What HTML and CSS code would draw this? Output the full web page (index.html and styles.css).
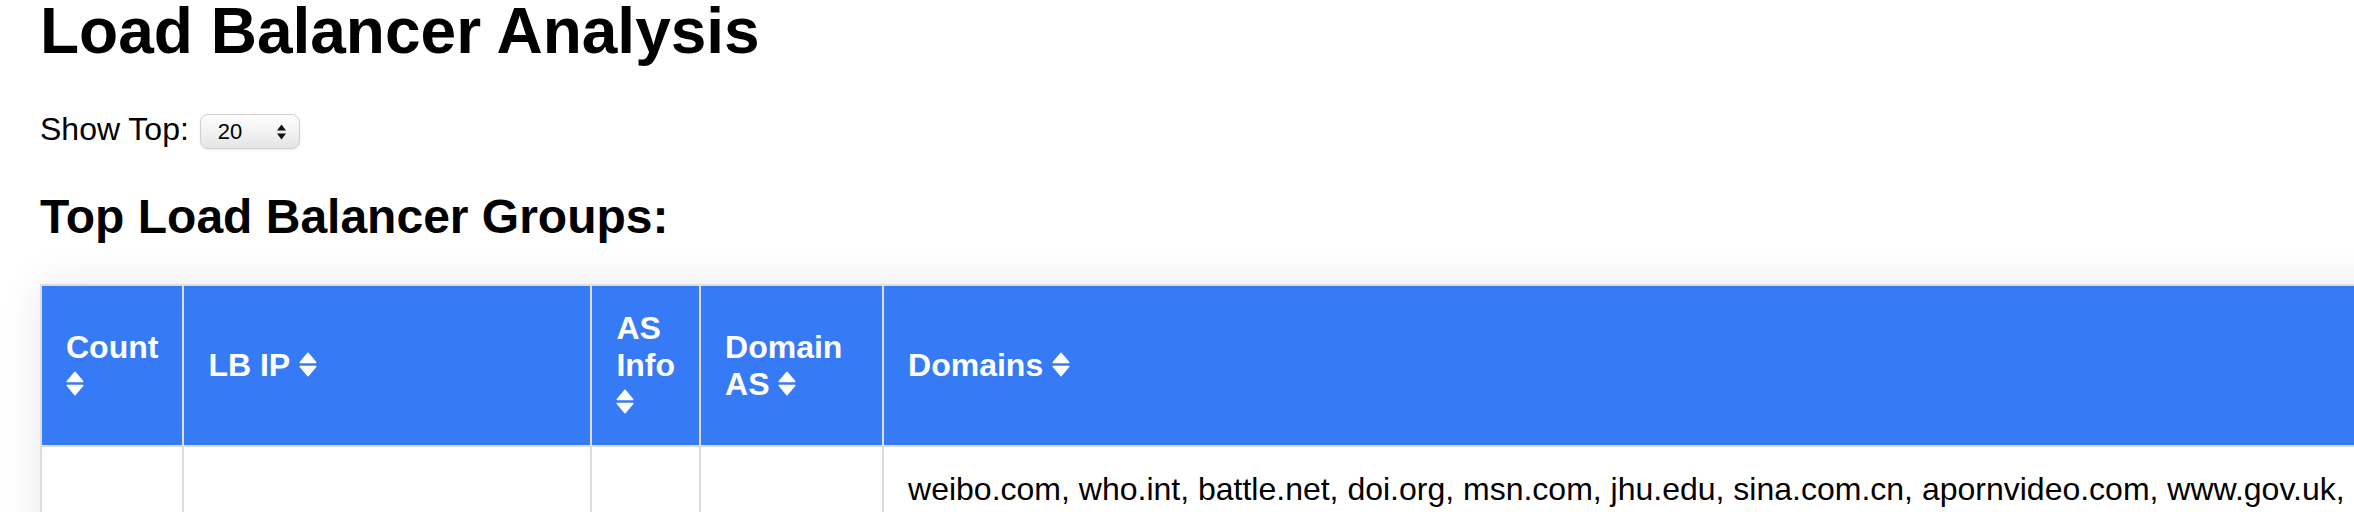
FILE: index.html
```html
<!DOCTYPE html>
<html lang="en">
<head>
<meta charset="utf-8">
<title>Load Balancer Analysis</title>
<link rel="stylesheet" href="styles.css">
</head>
<body>
<h1 class="title">Load Balancer Analysis</h1>
<div class="controls">
  <label for="topn">Show Top:</label>
  <span class="select-wrap">
    <select id="topn" class="select">
      <option>10</option>
      <option selected>20</option>
      <option>50</option>
      <option>100</option>
    </select>
    <svg class="select-arrows" viewBox="0 0 11 16" width="11" height="16" aria-hidden="true"><path d="M5.5 0.5 L10 6.5 H1 Z M1 9.5 H10 L5.5 15.5 Z" fill="#111"/></svg>
  </span>
</div>
<h2 class="subtitle">Top Load Balancer Groups:</h2>
<table class="lb-table">
  <thead>
    <tr>
      <th class="c-count">Count <svg class="sort" viewBox="0 0 18 25" width="18" height="25"><path d="M9 1.2 L16.8 10.5 H1.2 Z M1.2 14.5 H16.8 L9 23.8 Z" fill="#fff" stroke="#fff" stroke-width="1.4" stroke-linejoin="round"/></svg></th>
      <th class="c-ip">LB IP <svg class="sort" viewBox="0 0 18 25" width="18" height="25"><path d="M9 1.2 L16.8 10.5 H1.2 Z M1.2 14.5 H16.8 L9 23.8 Z" fill="#fff" stroke="#fff" stroke-width="1.4" stroke-linejoin="round"/></svg></th>
      <th class="c-as">AS Info <svg class="sort" viewBox="0 0 18 25" width="18" height="25"><path d="M9 1.2 L16.8 10.5 H1.2 Z M1.2 14.5 H16.8 L9 23.8 Z" fill="#fff" stroke="#fff" stroke-width="1.4" stroke-linejoin="round"/></svg></th>
      <th class="c-das">Domain AS <svg class="sort" viewBox="0 0 18 25" width="18" height="25"><path d="M9 1.2 L16.8 10.5 H1.2 Z M1.2 14.5 H16.8 L9 23.8 Z" fill="#fff" stroke="#fff" stroke-width="1.4" stroke-linejoin="round"/></svg></th>
      <th class="c-domains">Domains <svg class="sort" viewBox="0 0 18 25" width="18" height="25"><path d="M9 1.2 L16.8 10.5 H1.2 Z M1.2 14.5 H16.8 L9 23.8 Z" fill="#fff" stroke="#fff" stroke-width="1.4" stroke-linejoin="round"/></svg></th>
    </tr>
  </thead>
  <tbody>
    <tr>
      <td>142</td>
      <td>151.101.1.69</td>
      <td>N/A</td>
      <td>AS54113</td>
      <td>weibo.com, who.int, battle.net, doi.org, msn.com, jhu.edu, sina.com.cn, apornvideo.com, www.gov.uk, theguardian.com, imdb.com, nytimes.com, reddit.com, github.io, stackoverflow.com, bbc.co.uk, cnn.com, paypal.com, wikipedia.org, pinterest.com, spotify.com, vimeo.com, twitch.tv, etsy.com, quora.com, medium.com, wordpress.org, forbes.com, bloomberg.com, washingtonpost.com, wsj.com, usatoday.com, npr.org, buzzfeed.com, huffpost.com, time.com, cnet.com, wired.com, theverge.com, techcrunch.com, engadget.com, mashable.com, slate.com, vox.com, politico.com, axios.com, reuters.com, apnews.com, latimes.com, nbcnews.com, cbsnews.com, foxnews.com, abcnews.go.com, bbc.com, independent.co.uk, telegraph.co.uk, dailymail.co.uk, mirror.co.uk, thesun.co.uk, ft.com, economist.com, nature.com, sciencedirect.com, springer.com, wiley.com, arxiv.org, nih.gov, cdc.gov, harvard.edu, mit.edu, stanford.edu, berkeley.edu, yale.edu, princeton.edu, columbia.edu, cornell.edu, ox.ac.uk, cam.ac.uk, ucl.ac.uk</td>
    </tr>
  </tbody>
</table>
</body>
</html>
```
FILE: styles.css
```css
html, body {
  overflow: hidden;
}
body {
  margin: 0;
  padding: 0 40px;
  font-family: "Liberation Sans", Arial, Helvetica, sans-serif;
  font-size: 32px;
  color: #000;
  background: #fff;
}
.title {
  font-size: 64px;
  font-weight: bold;
  line-height: 58px;
  margin: 2px 0 51px;
}
.controls {
  margin: 0;
  white-space: nowrap;
}
.select-wrap {
  position: relative;
  display: inline-block;
  vertical-align: middle;
  margin-left: 2px;
}
.select {
  -webkit-appearance: none;
  appearance: none;
  display: block;
  width: 100px;
  height: 35px;
  box-sizing: border-box;
  border: 1px solid #cfcfcf;
  border-radius: 8px;
  background: linear-gradient(#fefefe, #f1f1f1 55%, #e4e4e4);
  box-shadow: 0 1px 2px rgba(0,0,0,0.08);
  font-family: "Liberation Sans", Arial, sans-serif;
  font-size: 22px;
  color: #000;
  padding: 0 0 0 17px;
  margin: 0;
}
.select-arrows {
  position: absolute;
  right: 13px;
  top: 10px;
  pointer-events: none;
}
.subtitle {
  font-size: 48px;
  font-weight: bold;
  margin: 40px 0;
}
.lb-table {
  border-collapse: collapse;
  width: 2360px;
  box-shadow: 0 0 40px rgba(0,0,0,0.09);
}
.lb-table th,
.lb-table td {
  border: 2px solid #dddddd;
  padding: 24px;
  text-align: left;
  vertical-align: middle;
}
.lb-table th {
  background: #377af6;
  color: #fff;
  font-weight: bold;
}
.lb-table td {
  color: #000;
}
.sort {
  display: inline-block;
  vertical-align: -1px;
}
.c-count { width: 92px; }
.c-ip { width: 358px; }
.c-as { width: 58px; }
.c-das { width: 133px; }
```
